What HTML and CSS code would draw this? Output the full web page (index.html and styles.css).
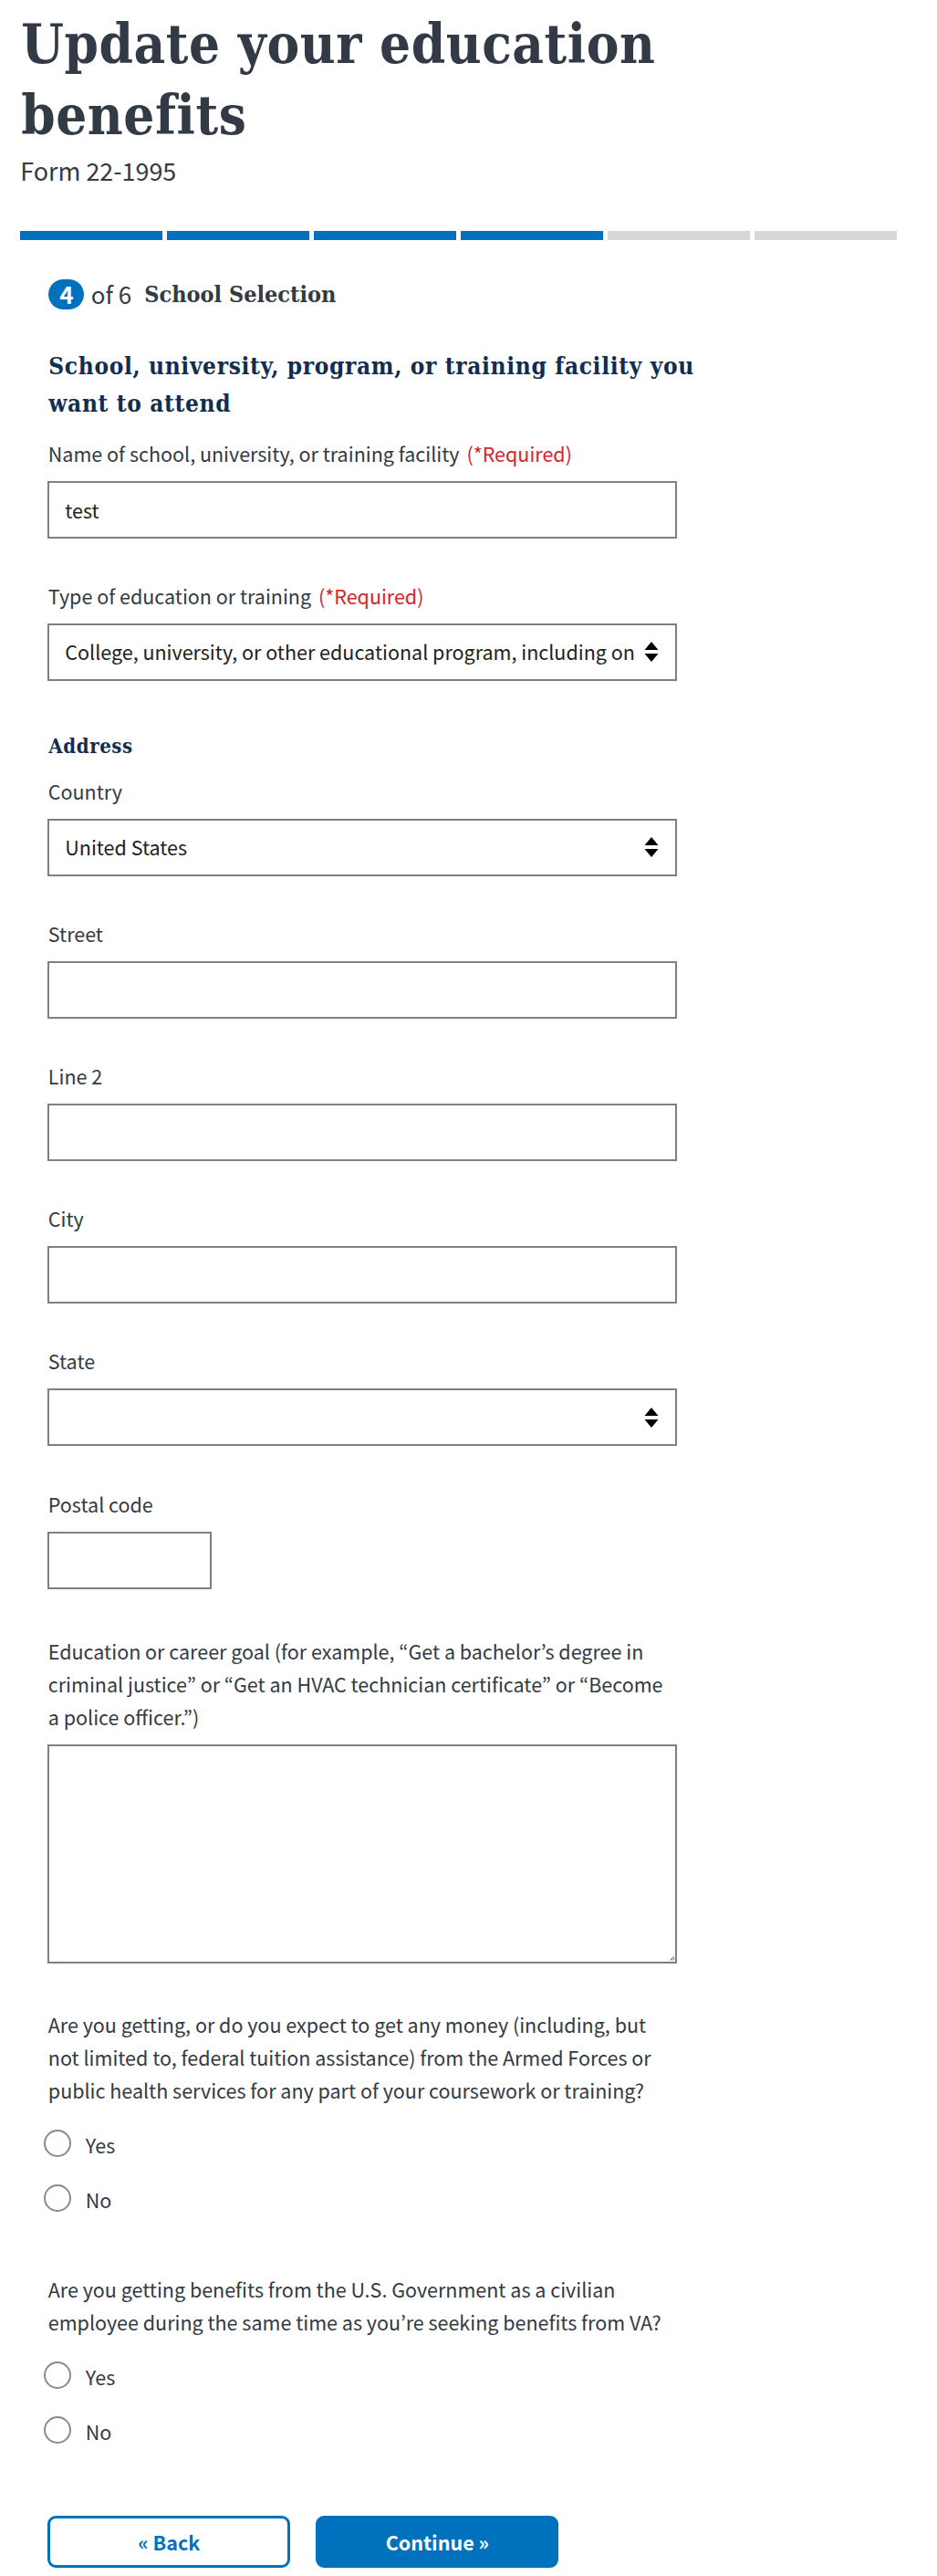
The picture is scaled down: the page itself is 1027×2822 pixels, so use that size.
FILE: index.html
```html
<!DOCTYPE html>
<html lang="en">
<head>
<meta charset="utf-8">
<title>Update your education benefits</title>
<link rel="stylesheet" href="styles.css">
</head>
<body>
<main class="page">
  <h1 class="title">Update your education<br>benefits</h1>
  <p class="form-number">Form 22-1995</p>
  <div class="progress">
    <span class="segment done"></span><span class="segment done"></span><span class="segment done"></span><span class="segment done"></span><span class="segment"></span><span class="segment"></span>
  </div>
  <form class="form">
    <div class="step"><span class="step-current">4</span><span class="step-total">of 6</span><strong class="step-name">School Selection</strong></div>
    <h2 class="section-title">School, university, program, or training facility you<br>want to attend</h2>
    <div class="field">
      <label class="label" for="school">Name of school, university, or training facility <span class="required">(*Required)</span></label>
      <input class="control" id="school" type="text" value="test">
    </div>
    <div class="field">
      <label class="label" for="type">Type of education or training <span class="required">(*Required)</span></label>
      <div class="select"><select class="control" id="type"><option>College, university, or other educational program, including online courses</option></select><svg class="arrows" viewBox="0 0 16 22"><path d="M8 0 15.5 9H.5ZM.5 13h15L8 22Z"/></svg></div>
    </div>
    <h3 class="group-title">Address</h3>
    <div class="field">
      <label class="label" for="country">Country</label>
      <div class="select"><select class="control" id="country"><option>United States</option></select><svg class="arrows" viewBox="0 0 16 22"><path d="M8 0 15.5 9H.5ZM.5 13h15L8 22Z"/></svg></div>
    </div>
    <div class="field"><label class="label" for="street">Street</label><input class="control" id="street" type="text"></div>
    <div class="field"><label class="label" for="line2">Line 2</label><input class="control" id="line2" type="text"></div>
    <div class="field"><label class="label" for="city">City</label><input class="control" id="city" type="text"></div>
    <div class="field">
      <label class="label" for="state">State</label>
      <div class="select"><select class="control" id="state"><option></option></select><svg class="arrows" viewBox="0 0 16 22"><path d="M8 0 15.5 9H.5ZM.5 13h15L8 22Z"/></svg></div>
    </div>
    <div class="field"><label class="label" for="postal">Postal code</label><input class="control postal" id="postal" type="text"></div>
    <div class="field goal">
      <label class="label" for="goal">Education or career goal (for example, “Get a bachelor’s degree in<br>criminal justice” or “Get an HVAC technician certificate” or “Become<br>a police officer.”)</label>
      <div class="select"><textarea class="control area" id="goal"></textarea><svg class="grip" viewBox="0 0 6 5"><path d="M.5 4.5 4.5.5M3 4.5 5.5 2"/></svg></div>
    </div>
    <fieldset class="question">
      <legend class="label">Are you getting, or do you expect to get any money (including, but<br>not limited to, federal tuition assistance) from the Armed Forces or<br>public health services for any part of your coursework or training?</legend>
      <label class="option"><input class="radio" type="radio" name="money"><span class="option-text">Yes</span></label>
      <label class="option"><input class="radio" type="radio" name="money"><span class="option-text">No</span></label>
    </fieldset>
    <fieldset class="question">
      <legend class="label">Are you getting benefits from the U.S. Government as a civilian<br>employee during the same time as you’re seeking benefits from VA?</legend>
      <label class="option"><input class="radio" type="radio" name="civilian"><span class="option-text">Yes</span></label>
      <label class="option"><input class="radio" type="radio" name="civilian"><span class="option-text">No</span></label>
    </fieldset>
    <div class="actions">
      <button class="button secondary" type="button">« Back</button>
      <button class="button" type="button">Continue »</button>
    </div>
  </form>
</main>
</body>
</html>
```
FILE: styles.css
```css
* { box-sizing: border-box; }
body { margin: 0; background: #fff; color: #323a45; font-family: "Noto Sans CJK KR", "Noto Sans", sans-serif; font-size: 21.5px; line-height: 36px; }
.page { width: 1027px; height: 2822px; padding: 9px 44.5px 0 22.3px; }
.title { margin: 0; padding-left: 1px; font-family: "DejaVu Serif Condensed", "DejaVu Serif", serif; font-stretch: condensed; font-weight: 700; font-size: 59.5px; line-height: 78px; letter-spacing: .55px; white-space: nowrap; }
.form-number { margin: 0; font-size: 26.9px; line-height: 43px; }
.progress { display: flex; gap: 5.5px; margin-top: 45px; }
.segment { flex: 1; height: 10px; background: #d6d7d9; }
.segment.done { background: #0071bc; }
.form { padding: 43px 0 0 30px; }
.step { display: flex; align-items: center; height: 33px; line-height: 33px; font-size: 26px; white-space: nowrap; }
.step-current { width: 39px; height: 33px; margin-left: 1px; border-radius: 17px; background: #0071bc; color: #fff; font-weight: 700; line-height: 31px; text-align: center; }
.step-total { margin-left: 7.5px; padding-bottom: 2px; }
.step-name { margin-left: 14px; font-family: "DejaVu Serif Condensed", "DejaVu Serif", serif; font-stretch: condensed; font-size: 25px; }
.section-title, .group-title { margin: 42px 0 0; padding-left: 1px; font-family: "DejaVu Serif Condensed", "DejaVu Serif", serif; font-stretch: condensed; font-weight: 700; font-size: 26px; line-height: 40.5px; letter-spacing: .65px; color: #112e51; white-space: nowrap; }
.field { display: flex; flex-direction: column; gap: 12px; width: 690px; margin-bottom: 45.2px; }
.section-title + .field { margin-top: 16.5px; }
.label { white-space: nowrap; padding: 0 0 0 .5px; }
.required { margin-left: 3px; color: #d8232a; }
.control { display: block; width: 100%; height: 63px; margin: 0; padding: 0 17px; border: 2px solid #7b8089; border-radius: 0; background: #fff; color: #212121; font: inherit; appearance: none; outline: 0; }
.select { display: grid; }
.select > * { grid-area: 1 / 1; }
.select .control { padding-right: 45px; }
.arrows { width: 16px; height: 22px; justify-self: end; align-self: center; margin-right: 20px; pointer-events: none; }
.group-title { margin: 53px 0 14px; font-size: 22px; line-height: 36px; letter-spacing: .6px; }
.postal { width: 180px; }
.goal { margin: 50px 0 0; }
.area { height: 240px; padding: 8px 17px; resize: none; }
.grip { width: 6px; height: 5px; justify-self: end; align-self: end; margin: 0 2px 3px 0; fill: none; stroke: #444; stroke-width: 1; pointer-events: none; }
.question { border: 0; margin: 49.5px 0 0; padding: 0; }
.question .label { margin-bottom: 10px; }
.question + .question { margin-top: 52px; }
.option { display: flex; align-items: center; height: 60px; }
.option-text { padding-top: 3px; }
.radio { appearance: none; width: 30px; height: 30px; margin: 0 15.5px 0 -4px; border: 2px solid #8a8a8a; border-radius: 50%; background: #fff; }
.actions { display: flex; gap: 28px; margin-top: 64px; }
.button { width: 266px; height: 57px; padding: 0; border: 3px solid #0071bc; border-radius: 9px; background: #0071bc; color: #fff; font: inherit; font-weight: 700; }
.button.secondary { background: #fff; color: #0071bc; }
```
